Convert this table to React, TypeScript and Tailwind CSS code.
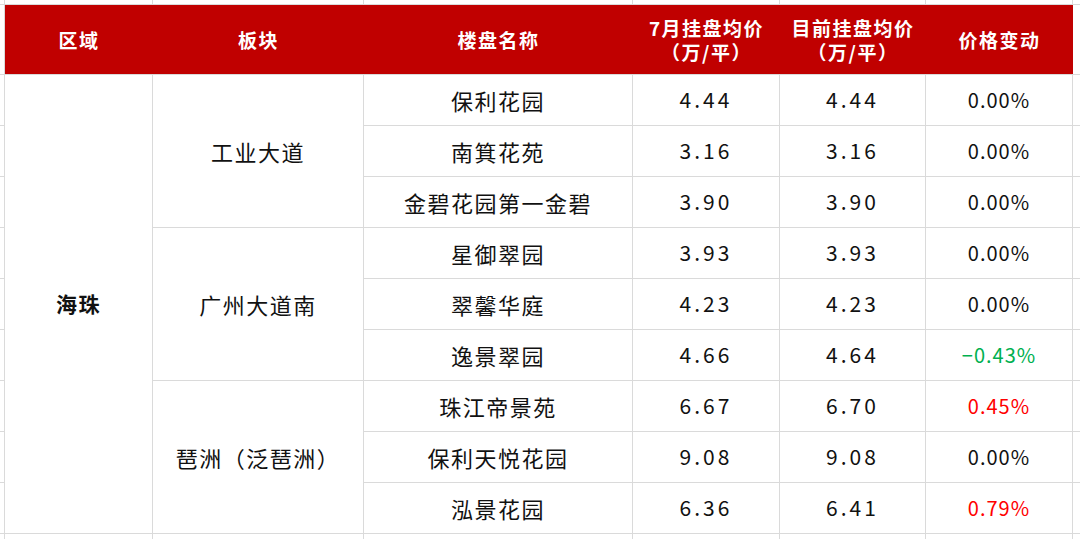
const HEADERS = [
  ['区域'],
  ['板块'],
  ['楼盘名称'],
  ['7月挂盘均价', '（万/平）'],
  ['目前挂盘均价', '（万/平）'],
  ['价格变动'],
];
const HEADER_WIDTHS = ['w-[148px]', 'w-[211px]', 'w-[269px]', 'w-[147px]', 'w-[146px]', 'w-[147px]'];

const ROWS = [
  { name: '保利花园', jul: '4.44', now: '4.44', chg: '0.00%', tone: 'flat' },
  { name: '南箕花苑', jul: '3.16', now: '3.16', chg: '0.00%', tone: 'flat' },
  { name: '金碧花园第一金碧', jul: '3.90', now: '3.90', chg: '0.00%', tone: 'flat' },
  { name: '星御翠园', jul: '3.93', now: '3.93', chg: '0.00%', tone: 'flat' },
  { name: '翠馨华庭', jul: '4.23', now: '4.23', chg: '0.00%', tone: 'flat' },
  { name: '逸景翠园', jul: '4.66', now: '4.64', chg: '−0.43%', tone: 'down' },
  { name: '珠江帝景苑', jul: '6.67', now: '6.70', chg: '0.45%', tone: 'up' },
  { name: '保利天悦花园', jul: '9.08', now: '9.08', chg: '0.00%', tone: 'flat' },
  { name: '泓景花园', jul: '6.36', now: '6.41', chg: '0.79%', tone: 'up' },
];

const BLOCKS: Record<number, string> = { 0: '工业大道', 3: '广州大道南', 6: '琶洲（泛琶洲）' };

const toneClass = (t: string) =>
  t === 'down' ? 'text-[#00b050]' : t === 'up' ? 'text-[#ff0000]' : 'text-[#111]';

const Blank = () => <div className="bg-white" />;

export default function App() {
  return (
    <div
      className="grid w-[1080px] h-[539px] overflow-hidden bg-[#dadada] gap-px grid-cols-[4px_147px_210px_268px_146px_145px_146px_1fr] grid-rows-[4px_69px_repeat(9,50px)_1fr]"
      style={{ fontFamily: '"Noto Sans CJK SC", "Noto Sans", sans-serif' }}
    >
      {/* top strip */}
      {Array.from({ length: 8 }).map((_, i) => <Blank key={'t' + i} />)}

      {/* header */}
      <Blank />
      <div className="col-span-6 bg-[#c00000] flex text-white font-bold text-[19px] tracking-[1.5px] -mr-px">
        {HEADERS.map((h, i) => (
          <div key={i} className={`${HEADER_WIDTHS[i]} flex flex-col items-center justify-center`}>
            {h.map((line, j) => (
              <span key={j} className="block h-[24px] leading-[24px]">{line}</span>
            ))}
          </div>
        ))}
      </div>
      <Blank />

      {/* body */}
      {ROWS.map((r, i) => (
        <div key={i} className="contents">
          <Blank />
          {i === 0 && (
            <div className="row-span-9 bg-white flex items-center justify-center font-bold text-[21px] text-[#111] tracking-[1.5px]">
              海珠
            </div>
          )}
          {BLOCKS[i] && (
            <div className="row-span-3 bg-white flex items-center justify-center text-[22px] text-[#111] tracking-[1.5px]">
              {BLOCKS[i]}
            </div>
          )}
          <div className="bg-white flex items-center justify-center text-[22px] text-[#111] tracking-[1.5px]">{r.name}</div>
          <div className="bg-white flex items-center justify-center text-[21px] text-[#111] tracking-[3px]">{r.jul}</div>
          <div className="bg-white flex items-center justify-center text-[21px] text-[#111] tracking-[3px]">{r.now}</div>
          <div className={`bg-white flex items-center justify-center text-[20px] tracking-[1px] ${toneClass(r.tone)}`}>{r.chg}</div>
          <Blank />
        </div>
      ))}

      {/* bottom strip */}
      {Array.from({ length: 8 }).map((_, i) => <Blank key={'b' + i} />)}
    </div>
  );
}
